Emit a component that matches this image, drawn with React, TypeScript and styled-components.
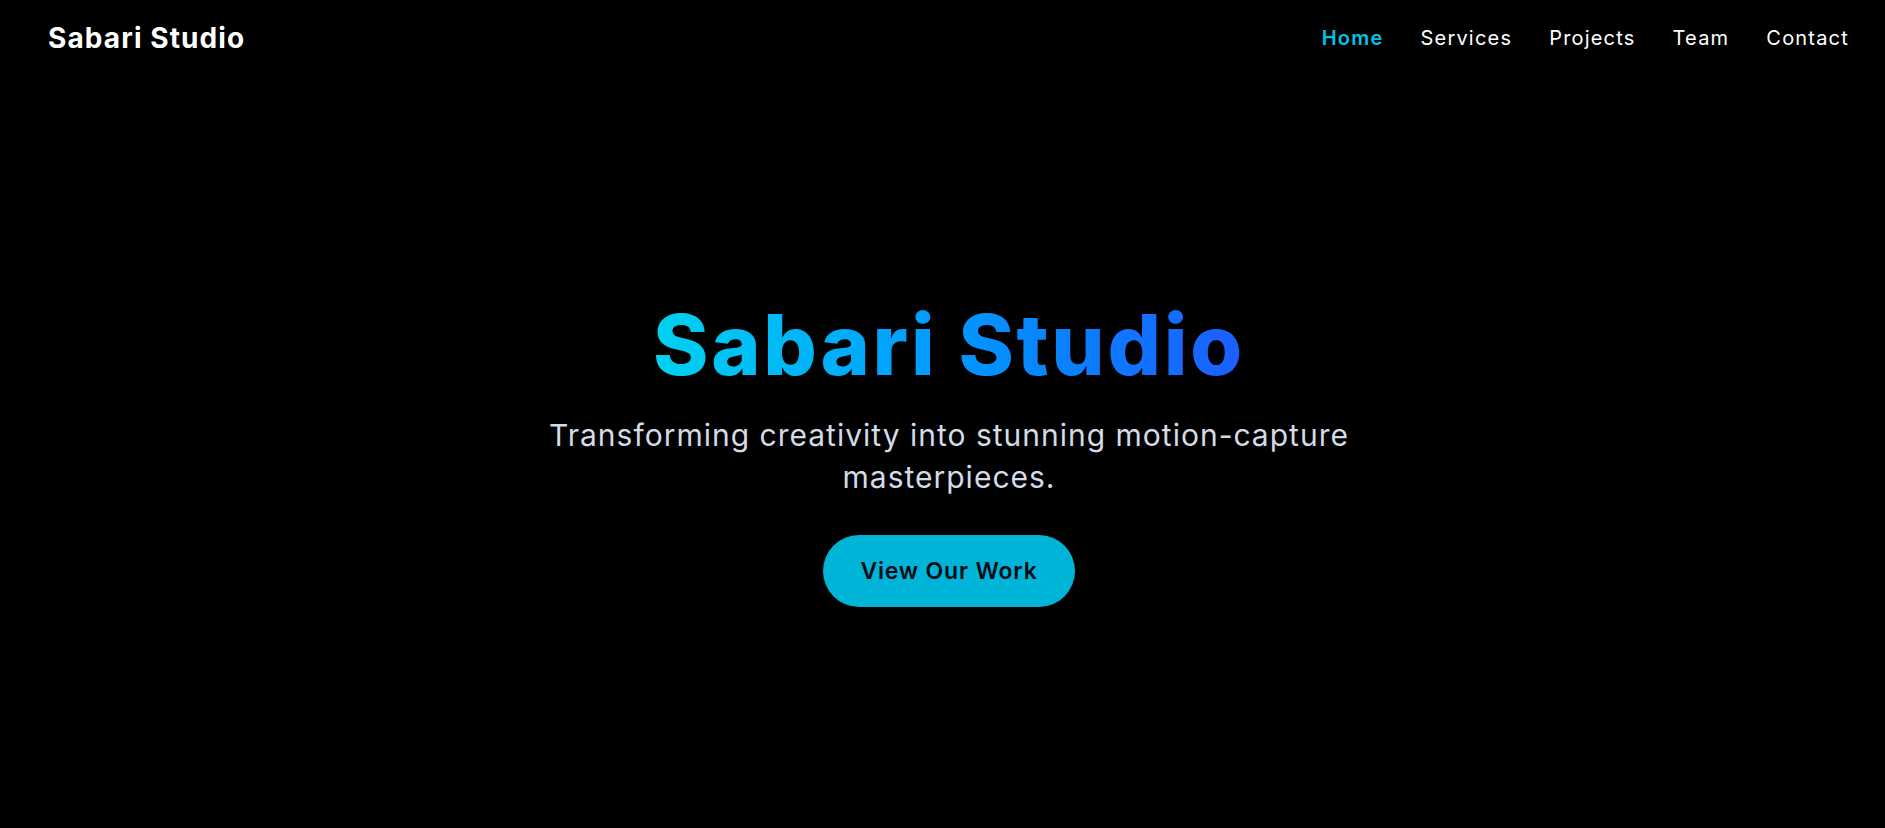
import React from 'react';
import styled, { createGlobalStyle } from 'styled-components';

const GlobalStyle = createGlobalStyle`
  * { box-sizing: border-box; }
  html, body {
    margin: 0;
    padding: 0;
    background: #000;
    font-family: Inter, "Open Sans", sans-serif;
  }
`;

const Page = styled.div`
  min-height: 828px;
  background: #000;
  color: #fff;
  display: flex;
  flex-direction: column;
`;

const Header = styled.header`
  height: 76px;
  display: flex;
  align-items: center;
  justify-content: space-between;
  padding: 0 36px 0 48px;
`;

const Logo = styled.a`
  font-size: 28px;
  font-weight: 700;
  color: #fff;
  text-decoration: none;
  letter-spacing: 1.1px;
`;

const Nav = styled.nav`
  display: flex;
  gap: 37px;
`;

const NavLink = styled.a<{ $active?: boolean }>`
  font-size: 20px;
  font-weight: ${(p) => (p.$active ? 600 : 400)};
  color: ${(p) => (p.$active ? '#00c4e6' : '#fff')};
  text-decoration: none;
  letter-spacing: 1.2px;
`;

// hero content sits a few px right of the page centre in the original
const Hero = styled.section`
  display: flex;
  flex-direction: column;
  align-items: center;
  text-align: center;
  padding: 219px 0 0 13px;
`;

const Title = styled.h1`
  margin: 0;
  font-size: 84px;
  font-weight: 800;
  line-height: 1.2;
  letter-spacing: 2.7px;
  background: linear-gradient(90deg, #00d2f0 0%, #0098ff 50%, #1b5eff 100%);
  -webkit-background-clip: text;
  background-clip: text;
  color: transparent;
`;

const Subtitle = styled.p`
  margin: 18px 0 0;
  max-width: 830px;
  font-size: 30px;
  line-height: 42px;
  font-weight: 400;
  letter-spacing: 1px;
  color: #d3dbe6;
`;

const Button = styled.a`
  margin-top: 37px;
  height: 72px;
  padding: 0 37px;
  display: inline-flex;
  align-items: center;
  border-radius: 36px;
  background: #00b4d8;
  color: #050a14;
  font-size: 23px;
  font-weight: 600;
  letter-spacing: 0.8px;
  text-decoration: none;
`;

const links = ['Home', 'Services', 'Projects', 'Team', 'Contact'];

export default function App() {
  return (
    <Page>
      <GlobalStyle />
      <Header>
        <Logo href="#">Sabari Studio</Logo>
        <Nav>
          {links.map((l, i) => (
            <NavLink key={l} href="#" $active={i === 0}>
              {l}
            </NavLink>
          ))}
        </Nav>
      </Header>
      <Hero>
        <Title>Sabari Studio</Title>
        <Subtitle>Transforming creativity into stunning motion-capture masterpieces.</Subtitle>
        <Button href="#">View Our Work</Button>
      </Hero>
    </Page>
  );
}
